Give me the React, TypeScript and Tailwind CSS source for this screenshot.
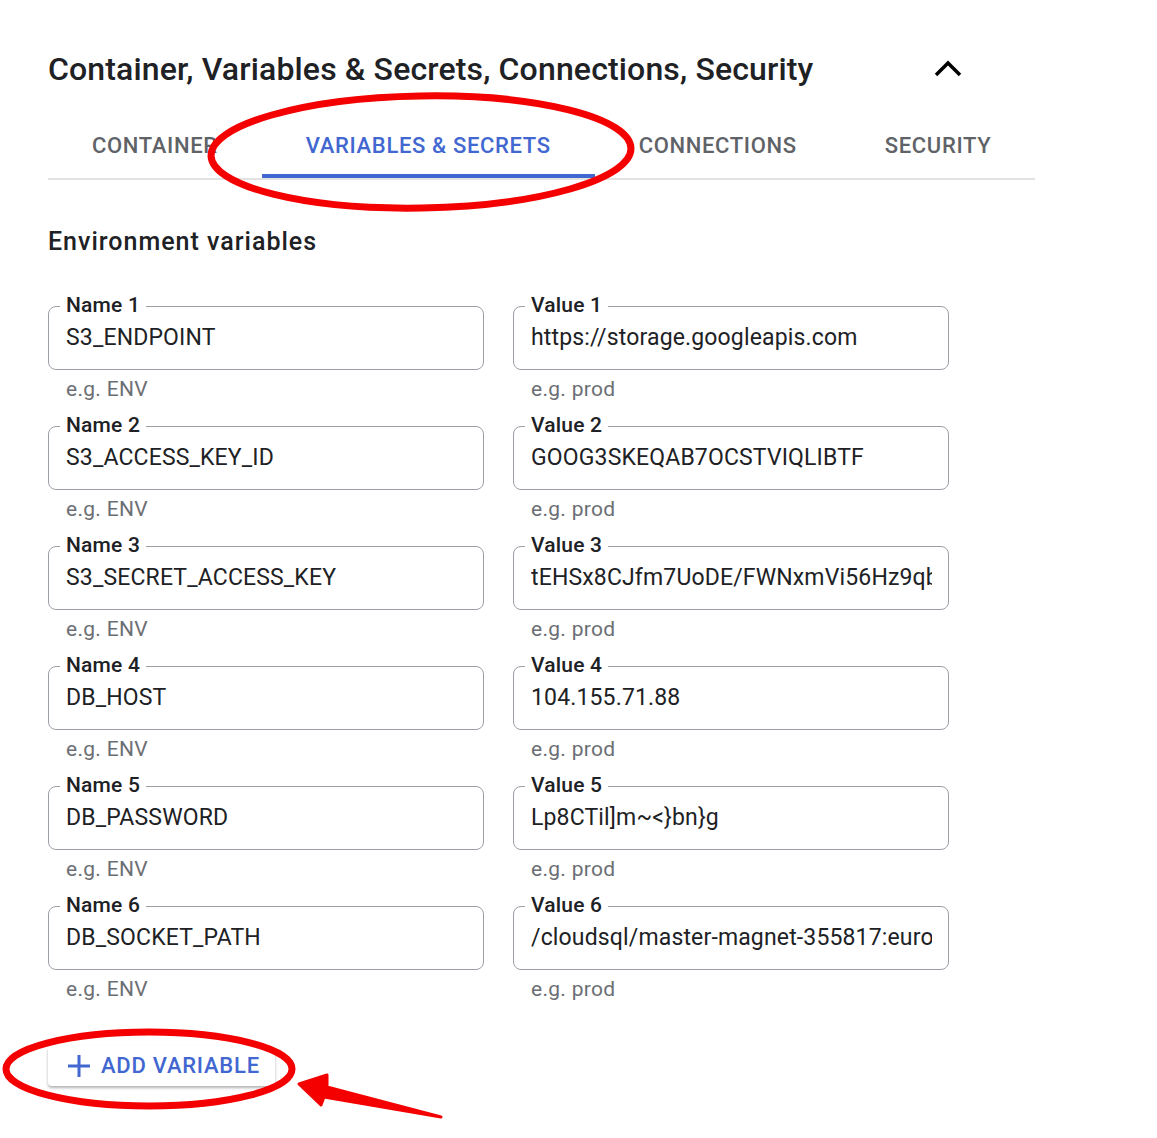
import React from "react";

const vars = [
  { name: "S3_ENDPOINT", value: "https://storage.googleapis.com" },
  { name: "S3_ACCESS_KEY_ID", value: "GOOG3SKEQAB7OCSTVIQLIBTF" },
  { name: "S3_SECRET_ACCESS_KEY", value: "tEHSx8CJfm7UoDE/FWNxmVi56Hz9qbXk2LrT" },
  { name: "DB_HOST", value: "104.155.71.88" },
  { name: "DB_PASSWORD", value: "Lp8CTil]m~<}bn}g" },
  { name: "DB_SOCKET_PATH", value: "/cloudsql/master-magnet-355817:europe-west1:db" },
];

const tabs = ["CONTAINER", "VARIABLES & SECRETS", "CONNECTIONS", "SECURITY"];

function Field({ label, value, hint }: { label: string; value: string; hint: string }) {
  return (
    <div className="flex flex-col">
      <div className="relative h-[64px] rounded-[8px] border border-[#9aa0a6] flex items-center pl-[17px] pr-[16px]">
        <span className="absolute left-[11px] -top-[2px] -translate-y-1/2 bg-white px-[6px] text-[21px] leading-[24px] font-medium tracking-[0.2px] text-[#202124]">
          {label}
        </span>
        <div className="w-full overflow-hidden whitespace-nowrap text-[23px] leading-[28px] tracking-[0.15px] text-[#202124]">
          {value}
        </div>
      </div>
      <div className="mt-[7px] pl-[18px] text-[21px] leading-[24px] tracking-[0.3px] text-[#6b6f74]">{hint}</div>
    </div>
  );
}

export default function App() {
  return (
    <div className="relative w-[1157px] min-h-[1138px] bg-white font-['Roboto',sans-serif] overflow-hidden">
      <div className="pl-12 pt-[49px]">
        {/* Section header */}
        <div className="flex items-center justify-between w-[914px] h-[40px]">
          <h2 className="text-[32px] leading-[40px] font-medium text-[#202124] tracking-[0.15px] whitespace-nowrap">
            Container, Variables &amp; Secrets, Connections, Security
          </h2>
          <svg width="28" height="20" viewBox="0 0 28 20" className="shrink-0">
            <polyline points="2,16 14,4 26,16" fill="none" stroke="#000" strokeWidth="3.5" />
          </svg>
        </div>

        {/* Tabs */}
        <div className="flex w-[987px] border-b-2 border-[#e3e3e3]">
          {tabs.map((t, i) => (
            <div
              key={t}
              className={
                i === 1
                  ? "shrink-0 whitespace-nowrap px-[44px] pt-[43px] pb-[14px] border-b-4 border-[#4267d1] text-[22px] leading-[28px] font-medium tracking-[0.65px] text-[#4267d1]"
                  : "shrink-0 whitespace-nowrap px-[44px] pt-[43px] pb-[14px] border-b-4 border-transparent text-[22px] leading-[28px] font-medium tracking-[0.65px] text-[#5f6368]"
              }
            >
              {t}
            </div>
          ))}
        </div>

        {/* Environment variables */}
        <h3 className="mt-[46px] text-[25px] leading-[32px] font-medium tracking-[1px] text-[#202124]">
          Environment variables
        </h3>

        <div className="mt-[48px] grid grid-cols-[436px_436px] gap-x-[29px] gap-y-[25px]">
          {vars.map((v, i) => (
            <React.Fragment key={v.name}>
              <Field label={`Name ${i + 1}`} value={v.name} hint="e.g. ENV" />
              <Field label={`Value ${i + 1}`} value={v.value} hint="e.g. prod" />
            </React.Fragment>
          ))}
        </div>

        {/* Add variable */}
        <button className="mt-[45px] flex items-center h-[40px] pl-[19px] pr-[15px] bg-white rounded-[4px] shadow-[0_2px_3px_rgba(0,0,0,0.3)] text-[#4267d1]">
          <svg width="24" height="24" viewBox="0 0 24 24">
            <path d="M12 1v22M1 12h22" stroke="#4267d1" strokeWidth="3" />
          </svg>
          <span className="ml-[10px] text-[22px] leading-[28px] font-medium tracking-[0.75px]">ADD VARIABLE</span>
        </button>
      </div>

      {/* Red annotations */}
      <svg className="absolute inset-0 pointer-events-none" width="1157" height="1138">
        <ellipse cx="421" cy="152" rx="210" ry="56" fill="none" stroke="#f40000" strokeWidth="7" transform="rotate(-1 421 152)" />
        <ellipse cx="149" cy="1069" rx="143" ry="37" fill="none" stroke="#f40000" strokeWidth="7" />
        <polygon
          points="299,1084 327,1075 327,1087 441,1117 324,1097 321,1105"
          fill="#f40000"
          stroke="#f40000"
          strokeWidth="3"
          strokeLinejoin="round"
        />
      </svg>
    </div>
  );
}
